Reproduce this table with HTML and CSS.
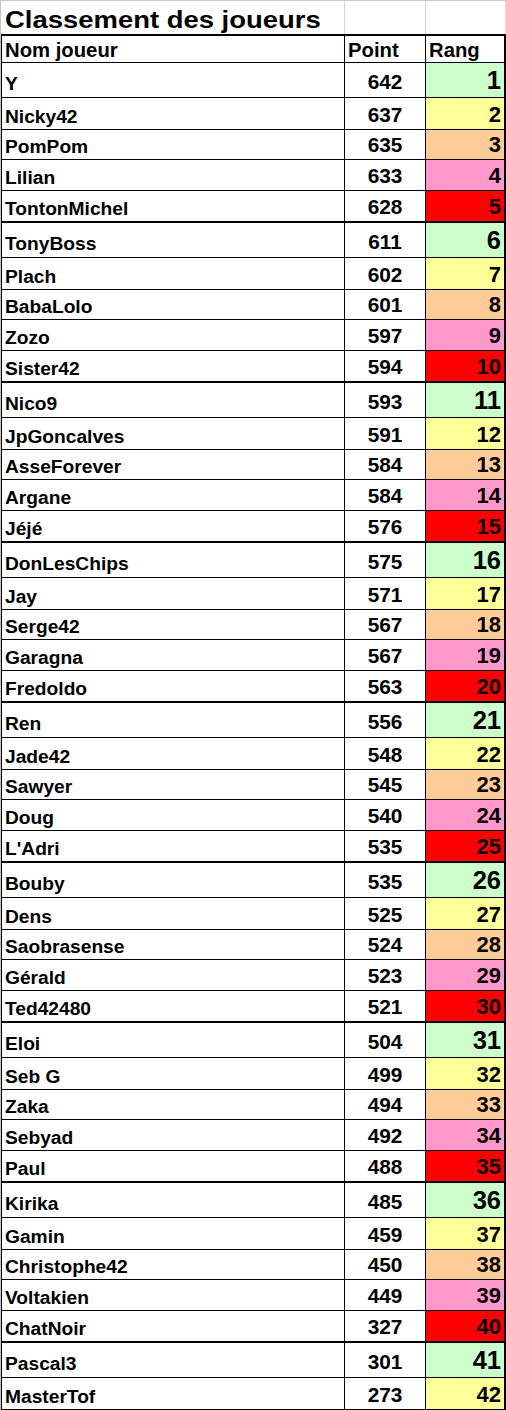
FILE: index.html
```html
<!DOCTYPE html>
<html lang="fr">
<head>
<meta charset="utf-8">
<title>Classement des joueurs</title>
<link rel="stylesheet" href="styles.css">
</head>
<body>
<div class="sheet">
  <div class="title-row">
    <div class="tcell first"><span class="title">Classement des joueurs</span></div>
    <div class="tcell"></div>
    <div class="tcell last"></div>
  </div>
  <div class="row head"><div class="c name">Nom joueur</div><div class="c pts">Point</div><div class="c rank">Rang</div></div>
  <div class="row g"><div class="c name">Y</div><div class="c pts">642</div><div class="c rank">1</div></div>
  <div class="row y"><div class="c name">Nicky42</div><div class="c pts">637</div><div class="c rank">2</div></div>
  <div class="row o"><div class="c name">PomPom</div><div class="c pts">635</div><div class="c rank">3</div></div>
  <div class="row p"><div class="c name">Lilian</div><div class="c pts">633</div><div class="c rank">4</div></div>
  <div class="row r"><div class="c name">TontonMichel</div><div class="c pts">628</div><div class="c rank">5</div></div>
  <div class="row g"><div class="c name">TonyBoss</div><div class="c pts">611</div><div class="c rank">6</div></div>
  <div class="row y"><div class="c name">Plach</div><div class="c pts">602</div><div class="c rank">7</div></div>
  <div class="row o"><div class="c name">BabaLolo</div><div class="c pts">601</div><div class="c rank">8</div></div>
  <div class="row p"><div class="c name">Zozo</div><div class="c pts">597</div><div class="c rank">9</div></div>
  <div class="row r"><div class="c name">Sister42</div><div class="c pts">594</div><div class="c rank">10</div></div>
  <div class="row g"><div class="c name">Nico9</div><div class="c pts">593</div><div class="c rank">11</div></div>
  <div class="row y"><div class="c name">JpGoncalves</div><div class="c pts">591</div><div class="c rank">12</div></div>
  <div class="row o"><div class="c name">AsseForever</div><div class="c pts">584</div><div class="c rank">13</div></div>
  <div class="row p"><div class="c name">Argane</div><div class="c pts">584</div><div class="c rank">14</div></div>
  <div class="row r"><div class="c name">Jéjé</div><div class="c pts">576</div><div class="c rank">15</div></div>
  <div class="row g"><div class="c name">DonLesChips</div><div class="c pts">575</div><div class="c rank">16</div></div>
  <div class="row y"><div class="c name">Jay</div><div class="c pts">571</div><div class="c rank">17</div></div>
  <div class="row o"><div class="c name">Serge42</div><div class="c pts">567</div><div class="c rank">18</div></div>
  <div class="row p"><div class="c name">Garagna</div><div class="c pts">567</div><div class="c rank">19</div></div>
  <div class="row r"><div class="c name">Fredoldo</div><div class="c pts">563</div><div class="c rank">20</div></div>
  <div class="row g"><div class="c name">Ren</div><div class="c pts">556</div><div class="c rank">21</div></div>
  <div class="row y"><div class="c name">Jade42</div><div class="c pts">548</div><div class="c rank">22</div></div>
  <div class="row o"><div class="c name">Sawyer</div><div class="c pts">545</div><div class="c rank">23</div></div>
  <div class="row p"><div class="c name">Doug</div><div class="c pts">540</div><div class="c rank">24</div></div>
  <div class="row r"><div class="c name">L'Adri</div><div class="c pts">535</div><div class="c rank">25</div></div>
  <div class="row g"><div class="c name">Bouby</div><div class="c pts">535</div><div class="c rank">26</div></div>
  <div class="row y"><div class="c name">Dens</div><div class="c pts">525</div><div class="c rank">27</div></div>
  <div class="row o"><div class="c name">Saobrasense</div><div class="c pts">524</div><div class="c rank">28</div></div>
  <div class="row p"><div class="c name">Gérald</div><div class="c pts">523</div><div class="c rank">29</div></div>
  <div class="row r"><div class="c name">Ted42480</div><div class="c pts">521</div><div class="c rank">30</div></div>
  <div class="row g"><div class="c name">Eloi</div><div class="c pts">504</div><div class="c rank">31</div></div>
  <div class="row y"><div class="c name">Seb G</div><div class="c pts">499</div><div class="c rank">32</div></div>
  <div class="row o"><div class="c name">Zaka</div><div class="c pts">494</div><div class="c rank">33</div></div>
  <div class="row p"><div class="c name">Sebyad</div><div class="c pts">492</div><div class="c rank">34</div></div>
  <div class="row r"><div class="c name">Paul</div><div class="c pts">488</div><div class="c rank">35</div></div>
  <div class="row g"><div class="c name">Kirika</div><div class="c pts">485</div><div class="c rank">36</div></div>
  <div class="row y"><div class="c name">Gamin</div><div class="c pts">459</div><div class="c rank">37</div></div>
  <div class="row o"><div class="c name">Christophe42</div><div class="c pts">450</div><div class="c rank">38</div></div>
  <div class="row p"><div class="c name">Voltakien</div><div class="c pts">449</div><div class="c rank">39</div></div>
  <div class="row r"><div class="c name">ChatNoir</div><div class="c pts">327</div><div class="c rank">40</div></div>
  <div class="row g"><div class="c name">Pascal3</div><div class="c pts">301</div><div class="c rank">41</div></div>
  <div class="row y"><div class="c name">MasterTof</div><div class="c pts">273</div><div class="c rank">42</div></div>
</div>
</body>
</html>
```
FILE: styles.css
```css
html, body {
  margin: 0;
  padding: 0;
  background: #ffffff;
}

body {
  font-family: "Liberation Sans", Arial, sans-serif;
  font-weight: bold;
  color: #000000;
}

.sheet {
  width: 506px;
  box-sizing: border-box;
  border-left: 1px solid #c4c4c4;
}

/* Title row: spreadsheet gridlines only */
.title-row {
  display: grid;
  grid-template-columns: 344px 81px 80px;
  height: 36px;
  box-sizing: border-box;
  border-top: 1px solid #c8c8c8;
  border-bottom: 2px solid #000000;
}

.tcell {
  box-sizing: border-box;
  border-right: 1px solid #d4d4d4;
  display: flex;
  align-items: flex-end;
}

.tcell.first {
  padding: 0 0 2px 4px;
  overflow: visible;
}

.title {
  display: inline-block;
  font-size: 24.5px;
  line-height: 1;
  white-space: nowrap;
  transform: scaleX(1.12);
  transform-origin: left bottom;
}

/* Table rows */
.row {
  display: grid;
  grid-template-columns: 343px 81px 80px;
  box-sizing: border-box;
  border-left: 1px solid #000000;
  border-bottom: 1px solid #000000;
}

.c {
  display: flex;
  align-items: flex-end;
  box-sizing: border-box;
  line-height: 1;
  padding-bottom: 3px;
  border-right: 1px solid #000000;
  white-space: nowrap;
}

.name {
  font-size: 19.2px;
  padding-left: 3px;
}

.pts {
  font-size: 20.8px;
  justify-content: center;
}

.rank {
  font-size: 22px;
  justify-content: flex-end;
  padding-right: 3px;
  border-right-width: 2px;
}

.head { height: 27px; }
.head .c {
  font-size: 20.3px;
  padding-bottom: 2px;
}
.head .pts,
.head .rank {
  justify-content: flex-start;
  padding-left: 3px;
}

.g { height: 35px; }
.y { height: 32px; }
.o { height: 30px; }
.p { height: 31px; }
.r { height: 32px; border-bottom-width: 2px; }

.g .c { padding-bottom: 4px; }
.g .rank { font-size: 25.5px; }

.g .rank { background: #ccffcc; }
.y .rank { background: #ffff99; }
.o .rank { background: #ffcc99; }
.p .rank { background: #ff99cc; }
.r .rank { background: #ff0000; }
```
